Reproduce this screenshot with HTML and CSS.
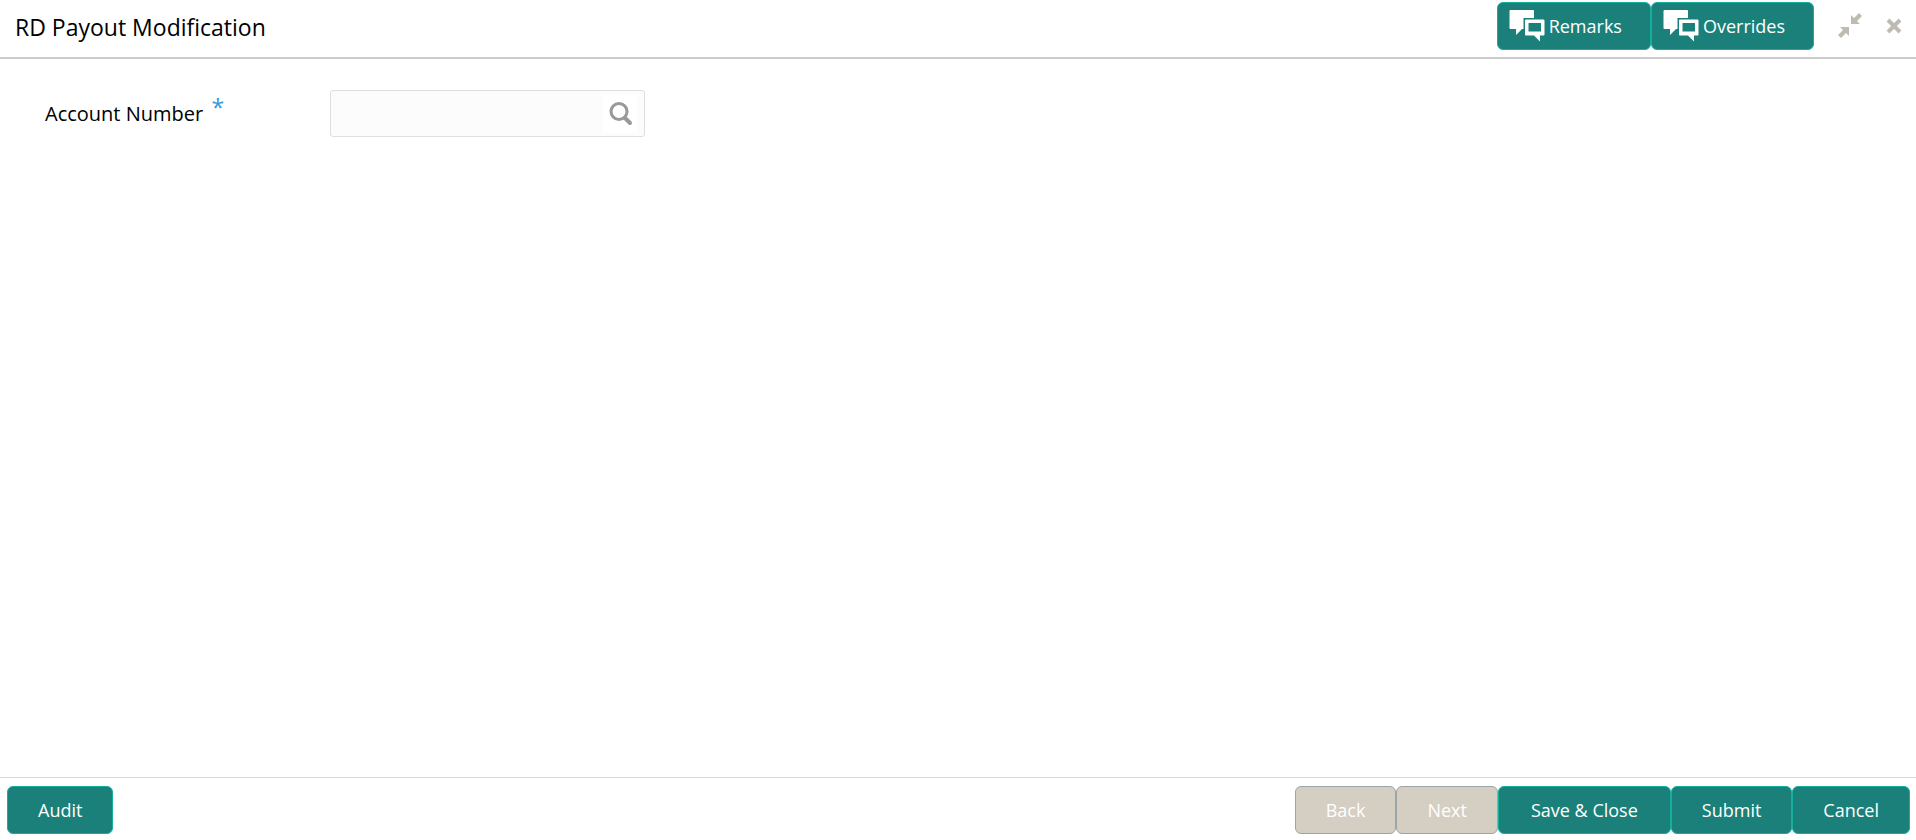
FILE: index.html
```html
<!DOCTYPE html>
<html lang="en">
<head>
    <meta charset="UTF-8">
    <meta name="viewport" content="width=device-width, initial-scale=1.0">
    <title>RD Payout Modification</title>
    <link rel="stylesheet" href="styles.css">
</head>
<body>
    <header class="header">
        <h1>RD Payout Modification</h1>
        <div class="header-actions">
            <button type="button" class="btn btn-icon">
                <svg width="36" height="32" viewBox="0 0 36 32" aria-hidden="true">
                    <path fill="#fff" d="M1.5 0h22.5q1 0 1 1v7H14.5v11H13l-6 6v-6H1.500q-1 0-1-1V1q0-1 1-1z"/>
                    <path fill="#fff" fill-rule="evenodd" d="M17 9.500h17.500q1 0 1 1v14q0 1-1 1H31v6l-6-6h-8q-1 0-1-1v-14q0-1 1-1zM19.500 13v8.500h12.500V13z"/>
                </svg>
                <span>Remarks</span>
            </button>
            <button type="button" class="btn btn-icon">
                <svg width="36" height="32" viewBox="0 0 36 32" aria-hidden="true">
                    <path fill="#fff" d="M1.5 0h22.5q1 0 1 1v7H14.5v11H13l-6 6v-6H1.500q-1 0-1-1V1q0-1 1-1z"/>
                    <path fill="#fff" fill-rule="evenodd" d="M17 9.500h17.500q1 0 1 1v14q0 1-1 1H31v6l-6-6h-8q-1 0-1-1v-14q0-1 1-1zM19.500 13v8.500h12.500V13z"/>
                </svg>
                <span>Overrides</span>
            </button>
            <button type="button" class="tool" aria-label="Collapse">
                <svg width="26" height="26" viewBox="0 0 26 26" aria-hidden="true">
                    <path fill="#bfbab2" d="M14 2l3 3 5-5 3 3-5 5 3 3h-9zM12 23l-3-3-5 5-3-3 5-5-3-3h9z"/>
                </svg>
            </button>
            <button type="button" class="tool" aria-label="Close">
                <svg width="16" height="16" viewBox="0 0 16 16" aria-hidden="true">
                    <path stroke="#bfbab2" stroke-width="4" d="M2 2l12 12M14 2L2 14"/>
                </svg>
            </button>
        </div>
    </header>
    <main class="content">
        <div class="field">
            <label for="account_number">Account Number <span class="required">*</span></label>
            <div class="lookup">
                <input type="text" id="account_number" name="account_number" required>
                <button type="button" class="search" aria-label="Search">
                    <svg width="24" height="24" viewBox="0 0 24 24" fill="none" stroke="#999" aria-hidden="true">
                        <circle cx="10" cy="9.500" r="8" stroke-width="3"/>
                        <path stroke-width="4" stroke-linecap="round" d="M16 16l5 5"/>
                    </svg>
                </button>
            </div>
        </div>
    </main>
    <footer class="footer">
        <button type="button" class="btn">Audit</button>
        <div class="footer-actions">
            <button type="button" class="btn" disabled>Back</button>
            <button type="button" class="btn" disabled>Next</button>
            <button type="button" class="btn btn-wide">Save &amp; Close</button>
            <button type="button" class="btn">Submit</button>
            <button type="button" class="btn">Cancel</button>
        </div>
    </footer>
</body>
</html>
```
FILE: styles.css
```css
* {
    box-sizing: border-box;
}
body {
    font-family: "Segoe UI", "Open Sans", sans-serif;
    font-size: 20px;
    color: #000;
    background-color: #fff;
    display: flex;
    flex-direction: column;
    min-height: 100vh;
    margin: 0;
}
button,
input {
    font-family: inherit;
}
.header {
    display: flex;
    justify-content: space-between;
    align-items: flex-start;
    padding: 2px 14px 5px 15px;
    border-bottom: 2px solid #ccc;
}
.header h1 {
    margin: 0;
    font-size: 23px;
    font-weight: 400;
    line-height: 50px;
}
.header-actions,
.footer-actions {
    display: flex;
}
.btn {
    height: 48px;
    padding: 0 30px;
    background-color: #1b7f7a;
    color: #fff;
    border: 1px solid #14b09f;
    border-radius: 6px;
    font-size: 18px;
    cursor: pointer;
}
.btn:disabled {
    background-color: #d5cec3;
    border-color: #9ca6a8;
    cursor: default;
}
.btn-icon {
    display: flex;
    align-items: center;
    gap: 4px;
    padding: 0 28px 0 11px;
}
.btn-wide {
    padding: 0 32px;
}
.tool {
    display: flex;
    align-items: center;
    height: 48px;
    padding: 0;
    margin-left: 23px;
    border: none;
    background: none;
    cursor: pointer;
}
.content {
    flex: 1;
    padding: 31px 45px;
}
.field {
    display: flex;
    align-items: center;
}
.field label {
    width: 285px;
    line-height: 28px;
    padding-bottom: 3px;
}
.required {
    margin-left: 3px;
    color: #3498db;
    font-size: 23px;
    line-height: 1;
    vertical-align: 5px;
}
.lookup {
    display: flex;
    align-items: center;
    width: 315px;
    height: 47px;
    padding-right: 7px;
    border: 1px solid #dfdfdf;
    border-radius: 3px;
    background-color: #fcfcfc;
}
.lookup input {
    flex: 1;
    min-width: 0;
    height: 100%;
    padding: 0 12px;
    border: none;
    outline: none;
    background: none;
    font-size: 20px;
}
.search {
    display: flex;
    align-items: center;
    justify-content: flex-end;
    width: 34px;
    height: 38px;
    padding: 0 4px 0 0;
    border: none;
    background-color: #fff;
    cursor: pointer;
}
.footer {
    display: flex;
    justify-content: space-between;
    padding: 8px 6px 6px 7px;
    border-top: 1px solid #d5d9dd;
}
```
